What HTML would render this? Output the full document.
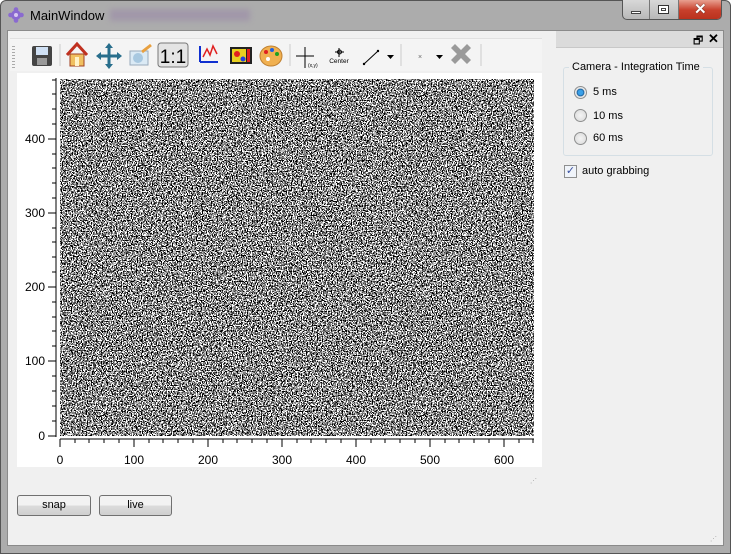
<!DOCTYPE html>
<html><head><meta charset="utf-8"><style>
*{box-sizing:border-box;margin:0;padding:0}
body{width:731px;height:554px;overflow:hidden;background:#fff;font-family:"Liberation Sans",sans-serif;font-size:12px;position:relative}
.abs{position:absolute}
.frame{left:0;top:0;width:731px;height:554px;background:#acacac;border:1px solid #555;border-radius:6px 6px 0 0}
.client{left:7px;top:30px;width:717px;height:516px;background:#f0f0f0;border:1px solid #8a8a8a}
.title{left:30px;top:8px;font-size:13px;color:#000}
.blur{left:110px;top:9px;width:140px;height:12px;background:#9a8aa8;filter:blur(3px);opacity:.6}
.btns{left:622px;top:0;width:100px;height:20px;border:1px solid #555;border-top:none;border-radius:0 0 5px 5px;overflow:hidden;background:linear-gradient(#d8d8d8,#b8b8b8)}
.close{left:56px;top:0;width:44px;height:20px;background:linear-gradient(#e8a090,#c8402c 50%,#b8301c)}
.tb{left:10px;top:38px;width:532px;height:33px;background:#f4f4f4;border-top:1px solid #e0e0e0}
.plot{left:17px;top:73px;width:525px;height:394px;background:#fff}
.lbl{font-size:12px;color:#000}
.btn{height:21px;border:1px solid #707070;border-radius:3px;background:linear-gradient(#f2f2f2 50%,#dcdcdc 50%,#cfcfcf);text-align:center;line-height:19px;font-size:11px}
.dockh{left:556px;top:31px;width:167px;height:17px;background:#dbdbdb;border-bottom:1px solid #c8c8c8}
.grp{left:563px;top:67px;width:150px;height:89px;border:1px solid #d5dfe5;border-radius:3px}
.radio{width:13px;height:13px;border-radius:50%;border:1px solid #8e8f8f;background:radial-gradient(#f4f4f4,#d8d8d8)}
</style></head><body>
<div class="abs frame"></div>
<svg class="abs" style="left:8px;top:7px" width="16" height="16"><g fill="#8a6ad0"><circle cx="8" cy="8" r="5"/><circle cx="8" cy="2.5" r="2.3"/><circle cx="8" cy="13.5" r="2.3"/><circle cx="2.5" cy="8" r="2.3"/><circle cx="13.5" cy="8" r="2.3"/></g><circle cx="8" cy="8" r="2" fill="#d8c8f0"/></svg>
<div class="abs title">MainWindow</div>
<div class="abs blur"></div>
<div class="abs btns"><div class="abs" style="left:26px;top:0;width:1px;height:20px;background:#777"></div><div class="abs" style="left:55px;top:0;width:1px;height:20px;background:#777"></div>
<div class="abs" style="left:8px;top:11px;width:10px;height:3px;background:#fff;border:1px solid #444"></div>
<div class="abs" style="left:35px;top:5px;width:11px;height:9px;border:1px solid #333;background:#fff;box-shadow:inset 0 0 0 2px #fff,inset 0 0 0 3px #444"></div>
<div class="abs close"><span class="abs" style="left:15px;top:0;color:#fff;font-weight:bold;font-size:15px;text-shadow:0 0 1px #000">✕</span></div></div>
<div class="abs client"></div>
<div class="abs tb"></div>
<div class="abs" style="left:12px;top:46px;width:3px;height:22px;background:repeating-linear-gradient(#aaa 0 1px,transparent 1px 3px)"></div>
<svg class="abs" style="left:14px;top:38px" width="530" height="33">
<rect x="18" y="8" width="20" height="20" rx="2" fill="#444"/><rect x="22" y="9" width="12" height="8" fill="#cfe0f4"/><rect x="23" y="20" width="10" height="7" fill="#999"/>
<line x1="46" y1="6" x2="46" y2="28" stroke="#ccc"/>
<path d="M53 17 L63 6 L73 17" fill="none" stroke="#c03020" stroke-width="3"/><rect x="56" y="16" width="14" height="12" fill="#f0c060" stroke="#a04020"/><rect x="61" y="19" width="4" height="9" fill="#fff3c8"/>
<g stroke="#286e8c" stroke-width="3"><line x1="84" y1="18" x2="106" y2="18"/><line x1="95" y1="7" x2="95" y2="29"/></g>
<g fill="#286e8c"><path d="M95 5l-4 5h8z"/><path d="M95 31l-4-5h8z"/><path d="M82 18l5-4v8z"/><path d="M108 18l-5-4v8z"/></g>
<rect x="116" y="13" width="18" height="14" fill="#dbeaf5" stroke="#9ab"/><circle cx="124" cy="20" r="5" fill="#a8c8e0"/><line x1="128" y1="14" x2="137" y2="7" stroke="#e8a040" stroke-width="3"/>
<rect x="144" y="5" width="30" height="24" rx="3" fill="#e4e4e4" stroke="#777"/><text x="159" y="25" text-anchor="middle" font-family="Liberation Sans" font-size="19" fill="#000">1:1</text>
<path d="M186 8v16M186 24h18" fill="none" stroke="#1030d0" stroke-width="2"/><path d="M189 19l4-8 3 6 3-9 4 8" fill="none" stroke="#e02020" stroke-width="1.5"/>
<rect x="216" y="9" width="22" height="17" fill="#222"/><rect x="218" y="11" width="14" height="13" fill="#e8d020"/><circle cx="223" cy="16" r="3" fill="#e02020"/><circle cx="229" cy="21" r="2.5" fill="#2040e0"/><rect x="233" y="11" width="3" height="13" fill="#e02020"/>
<ellipse cx="257" cy="18" rx="11" ry="10" fill="#f0b050" stroke="#c08030"/><circle cx="252" cy="14" r="2" fill="#e02020"/><circle cx="258" cy="12" r="2" fill="#2060e0"/><circle cx="263" cy="16" r="2" fill="#20a020"/><circle cx="254" cy="21" r="2" fill="#fff"/>
<line x1="276" y1="6" x2="276" y2="28" stroke="#ccc"/>
<g stroke="#000"><line x1="282" y1="18" x2="300" y2="18"/><line x1="291" y1="9" x2="291" y2="30"/></g><text x="294" y="29" font-size="5" font-family="Liberation Sans">(x,y)</text>
<path d="M325 10v9M321 14h9" stroke="#000"/><circle cx="325.5" cy="14" r="2" fill="none" stroke="#000"/><text x="325" y="25" text-anchor="middle" font-size="6.5" font-family="Liberation Sans">Center</text>
<path d="M350 26l14-13" stroke="#000"/><circle cx="350" cy="26" r="1.2"/><circle cx="364" cy="13" r="1.2"/>
<path d="M373 17h7l-3.5 4z" fill="#000"/>
<line x1="387" y1="6" x2="387" y2="28" stroke="#ccc"/>
<text x="404" y="21" font-size="7" fill="#666" font-family="Liberation Sans">×</text>
<path d="M422 17h7l-3.5 4z" fill="#000"/>
<path d="M437 10l4-4 6 6 6-6 4 4-6 6 6 6-4 4-6-6-6 6-4-4 6-6z" fill="#9a9a9a"/>
<line x1="467" y1="6" x2="467" y2="28" stroke="#ccc"/>
</svg>
<div class="abs plot"></div>
<svg class="abs" style="left:60px;top:79px" width="474" height="357">
<filter id="n" x="0" y="0" width="100%" height="100%" color-interpolation-filters="sRGB"><feTurbulence type="fractalNoise" baseFrequency="0.8" numOctaves="2" seed="3" result="t"/><feColorMatrix in="t" type="matrix" values="1 0 0 0 0  1 0 0 0 0  1 0 0 0 0  0 0 0 0 1"/><feComponentTransfer><feFuncR type="discrete" tableValues="0 1"/><feFuncG type="discrete" tableValues="0 1"/><feFuncB type="discrete" tableValues="0 1"/></feComponentTransfer></filter>
<rect width="474" height="357" fill="#888" filter="url(#n)"/>
</svg>
<svg class="abs" style="left:17px;top:73px" width="525" height="394" font-family="Liberation Sans" font-size="12">
<line x1="39" y1="5" x2="39" y2="364" stroke="#000"/>
<g stroke="#000">
<line x1="31" y1="363" x2="39" y2="363"/><line x1="31" y1="288" x2="39" y2="288"/><line x1="31" y1="214" x2="39" y2="214"/><line x1="31" y1="140" x2="39" y2="140"/><line x1="31" y1="66" x2="39" y2="66"/>
<line x1="35" y1="348" x2="39" y2="348"/><line x1="35" y1="333" x2="39" y2="333"/><line x1="35" y1="318" x2="39" y2="318"/><line x1="35" y1="303" x2="39" y2="303"/><line x1="35" y1="273" x2="39" y2="273"/><line x1="35" y1="258" x2="39" y2="258"/><line x1="35" y1="244" x2="39" y2="244"/><line x1="35" y1="229" x2="39" y2="229"/><line x1="35" y1="199" x2="39" y2="199"/><line x1="35" y1="184" x2="39" y2="184"/><line x1="35" y1="169" x2="39" y2="169"/><line x1="35" y1="155" x2="39" y2="155"/><line x1="35" y1="125" x2="39" y2="125"/><line x1="35" y1="110" x2="39" y2="110"/><line x1="35" y1="95" x2="39" y2="95"/><line x1="35" y1="81" x2="39" y2="81"/><line x1="35" y1="51" x2="39" y2="51"/><line x1="35" y1="36" x2="39" y2="36"/><line x1="35" y1="21" x2="39" y2="21"/><line x1="35" y1="7" x2="39" y2="7"/>
<line x1="43" y1="366" x2="517" y2="366"/>
<line x1="43" y1="366" x2="43" y2="374"/><line x1="117" y1="366" x2="117" y2="374"/><line x1="191" y1="366" x2="191" y2="374"/><line x1="265" y1="366" x2="265" y2="374"/><line x1="339" y1="366" x2="339" y2="374"/><line x1="413" y1="366" x2="413" y2="374"/><line x1="487" y1="366" x2="487" y2="374"/>
</g>
<path d="M58 366v4M72 366v4M87 366v4M102 366v4M132 366v4M146 366v4M161 366v4M176 366v4M206 366v4M220 366v4M235 366v4M250 366v4M280 366v4M294 366v4M309 366v4M324 366v4M354 366v4M368 366v4M383 366v4M398 366v4M428 366v4M442 366v4M457 366v4M472 366v4M502 366v4M516 366v4" stroke="#000"/>
<g text-anchor="end"><text x="28" y="367">0</text><text x="28" y="292">100</text><text x="28" y="218">200</text><text x="28" y="144">300</text><text x="28" y="70">400</text></g>
<g text-anchor="middle"><text x="43" y="391">0</text><text x="117" y="391">100</text><text x="191" y="391">200</text><text x="265" y="391">300</text><text x="339" y="391">400</text><text x="413" y="391">500</text><text x="487" y="391">600</text></g>
</svg>
<div class="abs btn" style="left:17px;top:495px;width:74px">snap</div>
<div class="abs btn" style="left:99px;top:495px;width:73px">live</div>
<div class="abs" style="left:530px;top:477px;font-size:7px;color:#aaa">⋰</div>
<div class="abs dockh"><span class="abs" style="left:137px;top:1px;font-size:11px">🗗</span><span class="abs" style="left:152px;top:0;font-size:13px;font-weight:bold">✕</span></div>
<div class="abs grp"></div>
<div class="abs lbl" style="left:569px;top:61px;background:#f0f0f0;padding:0 3px;font-size:11px">Camera - Integration Time</div>
<div class="abs radio" style="left:574px;top:86px;background:radial-gradient(#3aa0e8 30%,#1a5e9a 45%,#e8e8e8 55%)"></div>
<div class="abs lbl" style="left:593px;top:86px;font-size:11px">5 ms</div>
<div class="abs radio" style="left:574px;top:109px"></div>
<div class="abs lbl" style="left:593px;top:110px;font-size:11px">10 ms</div>
<div class="abs radio" style="left:574px;top:132px"></div>
<div class="abs lbl" style="left:593px;top:132px;font-size:11px">60 ms</div>
<div class="abs" style="left:564px;top:165px;width:13px;height:13px;border:1px solid #8e8f8f;background:#f0f4fa;color:#3a50a0;font-size:11px;line-height:11px;text-align:center">✓</div>
<div class="abs lbl" style="left:582px;top:165px;font-size:11px">auto grabbing</div>
<div class="abs" style="left:710px;top:535px;font-size:7px;color:#aaa">⋰</div>
</body></html>
